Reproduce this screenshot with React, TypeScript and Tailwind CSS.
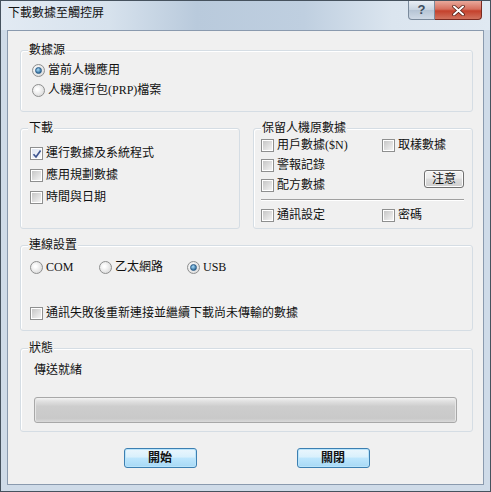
import type { ReactNode } from 'react';

function Check({ checked = false }: { checked?: boolean }) {
  return (
    <span className="relative flex h-[13px] w-[13px] shrink-0 items-center justify-center border border-[#8e8f8f] bg-white">
      <span
        className={
          checked
            ? 'h-[9px] w-[9px] bg-[linear-gradient(135deg,#dfe6f2,#f7f9fc)]'
            : 'h-[9px] w-[9px] bg-[linear-gradient(135deg,#c6c6c6,#f3f3f3)]'
        }
      />
      {checked && (
        <svg className="absolute left-[1px] top-[1px]" width="10" height="10" viewBox="0 0 10 10">
          <path d="M1.5 5.2 L4 8 L8.6 1.4" fill="none" stroke="#3e5590" strokeWidth="1.7" />
        </svg>
      )}
    </span>
  );
}

function Radio({ checked = false }: { checked?: boolean }) {
  return (
    <span className="flex h-[13px] w-[13px] shrink-0 items-center justify-center rounded-full border border-[#8e8f8f] bg-[radial-gradient(circle_at_40%_40%,#ffffff_10%,#d0d0d0_100%)]">
      {checked && (
        <span className="h-[7px] w-[7px] rounded-full border border-[#2a5c88] bg-[radial-gradient(circle_at_40%_35%,#a8dcfa,#2f6a98_75%)]" />
      )}
    </span>
  );
}

function Item({ children, kind, checked }: { children: ReactNode; kind: 'check' | 'radio'; checked?: boolean }) {
  return (
    <div className="flex h-full items-center gap-[3px]">
      {kind === 'check' ? <Check checked={checked} /> : <Radio checked={checked} />}
      <span className="whitespace-nowrap">{children}</span>
    </div>
  );
}

function Group({ label, className, boxClass, children }: { label: string; className?: string; boxClass: string; children: ReactNode }) {
  return (
    <div className={className}>
      <div className="relative z-10 h-[14px] pl-[8px] leading-[14px]">
        <span className="bg-[#f0f0f0] px-px">{label}</span>
      </div>
      <div className={`-mt-[7px] rounded-[3px] border border-[#d5dde4] shadow-[inset_1px_1px_0_#ffffff] ${boxClass}`}>
        {children}
      </div>
    </div>
  );
}

function DlgButton({ children }: { children: ReactNode }) {
  return (
    <button className="flex h-[20px] w-[73px] items-center justify-center rounded-[3px] border border-[#3c7fb1] bg-[linear-gradient(to_bottom,#eaf6fd_0%,#d9f0fc_45%,#bee6fd_50%,#a7d9f5_100%)] font-bold text-[12px] text-[#111] shadow-[inset_0_0_0_1px_#b9e4fb]">
      {children}
    </button>
  );
}

export default function App() {
  return (
    <div className="flex h-[492px] w-[491px] flex-col border border-[#46525e] bg-[#cfdbe8] font-['Liberation_Serif','Noto_Sans_CJK_TC',serif] text-[12px] text-[#111]">
      <div className="flex h-[29px] shrink-0 items-start justify-between bg-[linear-gradient(90deg,#e2eaf3_0%,#d7e2ed_22%,#b9cadc_40%,#bfcfe0_62%,#dbe5ef_80%,#e0e9f2_100%)] pl-[7px] pr-[8px]">
        <span className="mt-[4px] leading-[16px]">下載數據至觸控屏</span>
        <div className="flex">
          <div className="flex h-[19px] w-[27px] items-center justify-center rounded-bl-[4px] border border-t-0 border-[#7a8a9c] bg-[linear-gradient(to_bottom,#e9eef4,#c7d3e0_50%,#b5c4d4_51%,#cfdae6)] font-['Liberation_Sans',sans-serif] text-[13px] font-bold text-[#3e4d5e]">
            ?
          </div>
          <div className="flex h-[19px] w-[47px] items-center justify-center rounded-br-[4px] border border-l-0 border-t-0 border-[#7b2a20] bg-[linear-gradient(to_bottom,#e9a99c,#d6705f_45%,#c4412c_55%,#d0725e)]">
            <svg width="13" height="11" viewBox="0 0 13 11">
              <path d="M2 1.5 L11 9.5 M11 1.5 L2 9.5" stroke="#4a1810" strokeWidth="3.4" strokeLinecap="round" />
              <path d="M2 1.5 L11 9.5 M11 1.5 L2 9.5" stroke="#ffffff" strokeWidth="2" strokeLinecap="round" />
            </svg>
          </div>
        </div>
      </div>

      <div className="flex flex-1 px-[6px]">
        <div className="flex h-[455px] flex-1 flex-col border border-[#8a9aae] bg-[#f0f0f0] pl-[12px] pr-[10px] pt-[12px]">
          <Group label="數據源" boxClass="h-[62px] pl-[11px] pt-[9px]">
            <div className="h-[20px]">
              <Item kind="radio" checked>當前人機應用</Item>
            </div>
            <div className="h-[20px]">
              <Item kind="radio">人機運行包(PRP)檔案</Item>
            </div>
          </Group>

          <div className="mt-[9px] flex gap-[13px]">
            <Group label="下載" className="w-[220px]" boxClass="h-[101px] pl-[9px] pt-[13px]">
              <div className="h-[22px]">
                <Item kind="check" checked>運行數據及系統程式</Item>
              </div>
              <div className="h-[22px]">
                <Item kind="check">應用規劃數據</Item>
              </div>
              <div className="h-[22px]">
                <Item kind="check">時間與日期</Item>
              </div>
            </Group>

            <Group label="保留人機原數據" className="w-[220px]" boxClass="h-[101px] pl-[7px] pr-[8px] pt-[6px]">
              <div className="flex h-[20px]">
                <div className="w-[121px]">
                  <Item kind="check">用戶數據($N)</Item>
                </div>
                <Item kind="check">取樣數據</Item>
              </div>
              <div className="flex justify-between">
                <div>
                  <div className="h-[20px]">
                    <Item kind="check">警報記錄</Item>
                  </div>
                  <div className="h-[20px]">
                    <Item kind="check">配方數據</Item>
                  </div>
                </div>
                <button className="mt-[15px] flex h-[18px] w-[40px] items-center justify-center rounded-[3px] border border-[#707070] bg-[linear-gradient(to_bottom,#f2f2f2_0%,#ebebeb_45%,#dddddd_50%,#cfcfcf_100%)] text-[12px] shadow-[inset_0_0_0_1px_#fcfcfc]">
                  注意
                </button>
              </div>
              <div className="mt-[4px] h-[2px] border-t border-[#a0a0a0] bg-white" />
              <div className="mt-[4px] flex h-[20px]">
                <div className="w-[121px]">
                  <Item kind="check">通訊設定</Item>
                </div>
                <Item kind="check">密碼</Item>
              </div>
            </Group>
          </div>

          <Group label="連線設置" className="mt-[9px]" boxClass="h-[86px] pl-[9px] pt-[11px]">
            <div className="flex h-[20px]">
              <div className="w-[69px]">
                <Item kind="radio">COM</Item>
              </div>
              <div className="w-[88px]">
                <Item kind="radio">乙太網路</Item>
              </div>
              <Item kind="radio" checked>USB</Item>
            </div>
            <div className="mt-[26px] h-[20px]">
              <Item kind="check">通訊失敗後重新連接並繼續下載尚未傳輸的數據</Item>
            </div>
          </Group>

          <Group label="狀態" className="mt-[10px]" boxClass="h-[84px] pl-[13px] pt-[13px]">
            <div className="h-[16px] leading-[16px]">傳送就緒</div>
            <div className="mt-[19px] h-[26px] w-[423px] rounded-[3px] border border-[#a8a8a8] bg-[linear-gradient(to_bottom,#f4f4f4_0%,#e2e2e2_12%,#cdcdcd_35%,#c9c9c9_85%,#d9d9d9_100%)] shadow-[inset_1px_0_0_#e6e6e6,inset_-1px_0_0_#e6e6e6]" />
          </Group>

          <div className="mt-[16px] flex justify-center gap-[100px]">
            <DlgButton>開始</DlgButton>
            <DlgButton>關閉</DlgButton>
          </div>
        </div>
      </div>
    </div>
  );
}
